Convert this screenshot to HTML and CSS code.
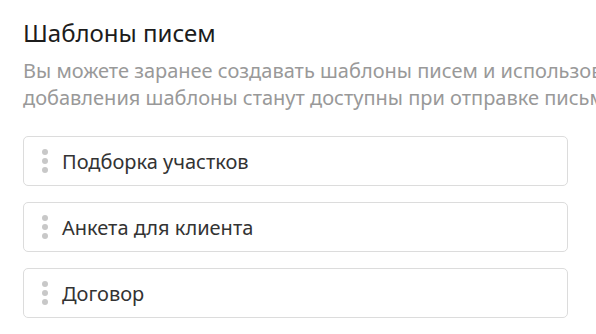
FILE: index.html
```html
<!DOCTYPE html>
<html lang="ru">
<head>
    <meta charset="UTF-8">
    <meta name="viewport" content="width=device-width, initial-scale=1.0">
    <title>Шаблоны писем</title>
    <link rel="stylesheet" href="styles.css">
</head>
<body>
    <div class="section">
        <h2 class="section-title">Шаблоны писем</h2>
        <p class="section-hint">Вы можете заранее создавать шаблоны писем и использовать их в работе. После<br>добавления шаблоны станут доступны при отправке письма клиенту.</p>
        <ul class="template-list">
            <li class="template-item">
                <span class="drag-handle"><i></i><i></i><i></i></span>
                <span class="template-name">Подборка участков</span>
            </li>
            <li class="template-item">
                <span class="drag-handle"><i></i><i></i><i></i></span>
                <span class="template-name">Анкета для клиента</span>
            </li>
            <li class="template-item">
                <span class="drag-handle"><i></i><i></i><i></i></span>
                <span class="template-name">Договор</span>
            </li>
        </ul>
    </div>
</body>
</html>
```

FILE: styles.css
```css
:root {
    --text-color: #222;
    --muted-color: #999;
    --border-color: #dcdcdc;
    --border-radius: 5px;
}
html, body { overflow: hidden; }
body { font-family: "Noto Sans", "Open Sans", Arial, sans-serif; margin: 0; background-color: #fff; color: var(--text-color); }
.section { padding: 16px 28px 0 23px; width: 545px; }
.section-title { margin: 0; font-size: 24px; font-weight: 400; line-height: 34px; color: #1c1c1c; }
.section-hint { margin: 7px 0 0; font-size: 20px; line-height: 27px; color: var(--muted-color); white-space: nowrap; }
.template-list { list-style: none; margin: 25px 0 0; padding: 0; display: flex; flex-direction: column; gap: 16px; }
.template-item { display: flex; align-items: center; height: 50px; box-sizing: border-box; border: 1px solid var(--border-color); border-radius: var(--border-radius); padding: 0 14px 0 18px; }
.drag-handle { display: flex; flex-direction: column; gap: 3px; width: 6px; margin-right: 14px; cursor: grab; }
.drag-handle i { display: block; width: 6px; height: 6px; border-radius: 50%; background-color: #c8c8c8; }
.template-name { font-size: 20px; color: #333; }
```
